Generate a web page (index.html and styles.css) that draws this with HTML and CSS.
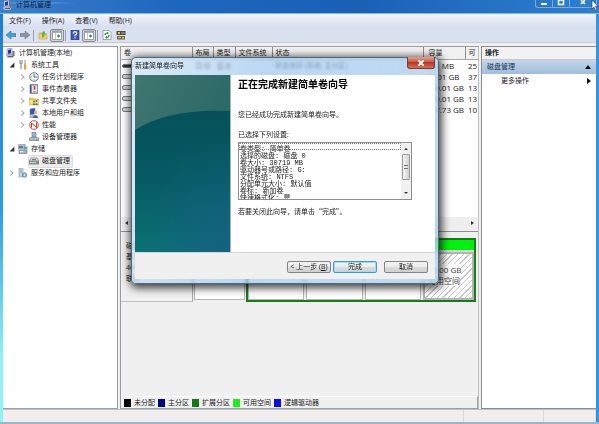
FILE: index.html
```html
<!DOCTYPE html>
<html lang="zh-CN">
<head>
	<meta charset="UTF-8">
	<title>计算机管理</title>

	<link rel="stylesheet" href="styles.css">
</head>
<body>

	<!-- 公用图标 -->
	<svg class="defs" aria-hidden="true">
		<symbol id="i-computer" viewBox="0 0 10 10">
			<path d="M0 7l3-2 6 2-2 3H1z" fill="#b9bec6"/>
			<path d="M1 1l5-1v6l-5 1z" fill="#e6ebf5" stroke="#6d7892" stroke-width=".6"/>
			<path d="M2 2l3-.8v4L2 6z" fill="#2338ae"/>
			<path d="M6.500 3h2v5h-2z" fill="#6d7686"/>
			<path d="M2 8.500h5" stroke="#56606f"/>
		</symbol>
		<symbol id="i-tools" viewBox="0 0 10 10">
			<path d="M2 0v3l1 1v5M4 0v3L3 4" fill="none" stroke="#8d939a" stroke-width="1.200"/>
			<path d="M7 0v5" stroke="#8d939a"/>
			<path d="M7 4.500v5" stroke="#e5a127" stroke-width="2.200"/>
		</symbol>
		<symbol id="i-clock" viewBox="0 0 10 10">
			<circle cx="5" cy="5" r="4.300" fill="#eef4fb" stroke="#77797c" stroke-width="1"/>
			<path d="M5 2v3h3" fill="none" stroke="#3568a6" stroke-width=".9"/>
			<path d="M1.500 5H3M5 7v1.500" stroke="#c99a3d" stroke-width=".8"/>
		</symbol>
		<symbol id="i-event" viewBox="0 0 10 10">
			<path d="M1 .5h7.500v9H1z" fill="#8193bd" stroke="#5b6480" stroke-width=".6"/>
			<path d="M3 1.500h5v7H3z" fill="#dfe6f3"/>
			<path d="M5.500 2v3.500" stroke="#d22a22" stroke-width="1.500"/>
			<path d="M4 7.500h3" stroke="#e0a52a"/>
			<path d="M1.500 1v8" stroke="#46527a"/>
		</symbol>
		<symbol id="i-share" viewBox="0 0 10 10">
			<path d="M0 2h4l1 1h5v6H0z" fill="#efc34f" stroke="#c9993b" stroke-width=".5"/>
			<path d="M.5 4h9v4.500h-9z" fill="#f9de86"/>
			<circle cx="5" cy="5.500" r="1" fill="#3f8a3e"/>
			<circle cx="7.500" cy="5" r="1" fill="#3f6fae"/>
			<path d="M3.500 9q1.500-4 3 0zM6 9q1.500-4 3 0z" fill="#4c8b56"/>
		</symbol>
		<symbol id="i-users" viewBox="0 0 10 10">
			<path d="M1 1l5-1v6l-5 1z" fill="#2f54b5" stroke="#8791a5" stroke-width=".6"/>
			<path d="M0 8l4-1 5 1-2 2H1z" fill="#aab0ba"/>
			<circle cx="6.500" cy="4.500" r="1.700" fill="#e0ad6a"/>
			<path d="M3.500 10q3-6 6 0z" fill="#3d66a8"/>
		</symbol>
		<symbol id="i-perf" viewBox="0 0 10 10">
			<circle cx="5" cy="5" r="4.300" fill="#fff" stroke="#b05752" stroke-width="1"/>
			<path d="M2.500 7.500V3l5 4.500V2.500" fill="none" stroke="#cf2f27" stroke-width="1"/>
		</symbol>
		<symbol id="i-device" viewBox="0 0 10 10">
			<path d="M3 0h4v5H3z" fill="#9fb2c8" stroke="#6c7785" stroke-width=".6"/>
			<path d="M0 6l2-1h6l2 1v3H0z" fill="#92989f"/>
			<path d="M1 7h8" stroke="#e4e8ec" stroke-width=".8"/>
			<path d="M7.500 8.300h1" stroke="#2fa53a"/>
		</symbol>
		<symbol id="i-storage" viewBox="0 0 10 10">
			<path d="M0 1l2-1h5v5H0z" fill="#b6c2cf" stroke="#74818f" stroke-width=".6"/>
			<path d="M1 2h4v2H1z" fill="#3b84a8"/>
			<path d="M1 6h8v3.500H1z" fill="#a8b1ba" stroke="#6b7580" stroke-width=".6"/>
			<path d="M6 2.500h3.500v3H6z" fill="#58a7c4"/>
			<path d="M2 7.700h3" stroke="#fff"/>
		</symbol>
		<symbol id="i-disk" viewBox="0 0 10 10">
			<path d="M0 5l2-3h6l2 3z" fill="#d4d7da" stroke="#74797d" stroke-width=".6"/>
			<path d="M0 5h10v3.500H0z" fill="#878c90"/>
			<path d="M1 6.500h6" stroke="#e6e8ea" stroke-width=".8"/>
			<path d="M3 3.700h4" stroke="#55595c" stroke-width=".8"/>
		</symbol>
		<symbol id="i-services" viewBox="0 0 10 10">
			<path d="M1 0h4v9H1z" fill="#c5d3e0" stroke="#8397aa" stroke-width=".6"/>
			<path d="M2 2h2M2 4h2" stroke="#6f8ba5" stroke-width=".7"/>
			<circle cx="6.500" cy="7" r="2.200" fill="#8eb1ce" stroke="#5c83a6" stroke-width=".8"/>
			<circle cx="6.500" cy="7" r=".8" fill="#fff"/>
		</symbol>
		<symbol id="i-panel" viewBox="0 0 10 10">
			<path d="M.5 1h9v8.500h-9z" fill="#fafafa" stroke="#8b8e94" stroke-width=".8"/>
			<path d="M.5 2h9" stroke="#8f949e" stroke-width="1.500"/>
			<path d="M3.500 3v6.500" stroke="#a4a8af" stroke-width=".6"/>
			<path d="M5 6h3M6.500 4.500v3" stroke="#39a045" stroke-width="1.300"/>
		</symbol>
	</svg>

	<div class="window">
		<header class="titlebar">
			<svg class="icon"><use href="#i-computer"/></svg>
			<h1>计算机管理</h1>
			<div class="winbtns">
				<button type="button" aria-label="最小化"><svg viewBox="0 0 10 8"><path d="M2 4h6" stroke="#fff" stroke-width="2"/></svg></button>
				<button type="button" aria-label="最大化"><svg viewBox="0 0 10 8"><path d="M2.500 0h5v4.500h-5z" fill="none" stroke="#fff" stroke-width="1.500"/></svg></button>
				<button type="button" class="wide" aria-label="关闭"><svg viewBox="0 0 10 8"><path d="M3 0l4 4M7 0L3 4" stroke="#fff" stroke-width="1.500"/></svg></button>
			</div>
		</header>

		<nav class="menu">
			<a href="#">文件(F)</a>
			<a href="#">操作(A)</a>
			<a href="#">查看(V)</a>
			<a href="#">帮助(H)</a>
		</nav>

		<div class="toolbar">
			<button type="button" aria-label="后退"><svg viewBox="0 0 10 10"><path d="M0 5l5-4v2.500h5v3H5V9z" fill="#3aa3dc" stroke="#2477b5" stroke-width=".6"/></svg></button>
			<button type="button" aria-label="前进"><svg viewBox="0 0 10 10"><path d="M10 5L5 1v2.500H0v3h5V9z" fill="#8c939e" stroke="#757c88" stroke-width=".6"/></svg></button>
			<span class="sep"></span>
			<button type="button" aria-label="上一级"><svg viewBox="0 0 10 10"><path d="M1 3h3l1 1h4v5H1z" fill="#f2d06c" stroke="#c9a34b" stroke-width=".6"/><path d="M4 8V4L2.500 4.500 6 .5l2 4H6.500q0 3-2.500 3.500z" fill="#69b544"/></svg></button>
			<button type="button" class="on" aria-label="显示控制台树"><svg viewBox="0 0 10 10"><use href="#i-panel"/></svg></button>
			<span class="sep"></span>
			<button type="button" aria-label="帮助"><svg viewBox="0 0 10 10"><path d="M1 0h8v10H1z" fill="#3c57bd" stroke="#27366f" stroke-width=".6"/><path d="M3.300 3.500q0-1.800 1.700-1.800t1.700 1.500Q6.700 4.500 5 5v1.300M5 7.300v1.300" fill="none" stroke="#fff" stroke-width="1.200"/></svg></button>
			<button type="button" class="on" aria-label="显示操作窗格"><svg viewBox="0 0 10 10"><use href="#i-panel"/></svg></button>
			<span class="sep"></span>
			<button type="button" aria-label="刷新"><svg viewBox="0 0 10 10"><path d="M1 .5h6l2 2v7H1z" fill="#fff" stroke="#7d858c" stroke-width=".7"/><path d="M3 5q0-2 2.500-2M7 5q0 2.500-2.500 2.500" fill="none" stroke="#278f2e" stroke-width="1.200"/><path d="M5 1.500l2 1.500-2 1.500zM5 6L3 7.500 5 9z" fill="#278f2e"/></svg></button>
			<button type="button" aria-label="设置"><svg viewBox="0 0 10 10"><path d="M.5 1h9v4h-9z" fill="#4f4c3c"/><path d="M1 6h8v3.500H1z" fill="#6d6848"/><path d="M2 2h2v2H2zM6 7h2v1.500H6z" fill="#e3c53e"/><path d="M5.500 3h3M2 7.500h3" stroke="#d9d8cc" stroke-width=".9"/></svg></button>
		</div>

		<main class="panes">
			<aside class="tree">
				<div class="row"><svg class="icon"><use href="#i-computer"/></svg>计算机管理(本地)</div>
				<ul>
					<li>
						<div class="row"><i class="arrow open"></i><svg class="icon"><use href="#i-tools"/></svg>系统工具</div>
						<ul>
							<li class="row"><i class="arrow"></i><svg class="icon"><use href="#i-clock"/></svg>任务计划程序</li>
							<li class="row"><i class="arrow"></i><svg class="icon"><use href="#i-event"/></svg>事件查看器</li>
							<li class="row"><i class="arrow"></i><svg class="icon"><use href="#i-share"/></svg>共享文件夹</li>
							<li class="row"><i class="arrow"></i><svg class="icon"><use href="#i-users"/></svg>本地用户和组</li>
							<li class="row"><i class="arrow"></i><svg class="icon"><use href="#i-perf"/></svg>性能</li>
							<li class="row"><i class="arrow none"></i><svg class="icon"><use href="#i-device"/></svg>设备管理器</li>
						</ul>
					</li>
					<li>
						<div class="row"><i class="arrow open"></i><svg class="icon"><use href="#i-storage"/></svg>存储</div>
						<ul>
							<li class="row"><i class="arrow none"></i><span class="current"><svg class="icon"><use href="#i-disk"/></svg>磁盘管理</span></li>
						</ul>
					</li>
					<li class="row"><i class="arrow"></i><svg class="icon"><use href="#i-services"/></svg>服务和应用程序</li>
				</ul>
			</aside>

			<section class="center">
				<div class="volumes">
					<table>
						<colgroup>
							<col class="c-name"><col class="c-layout"><col class="c-type"><col class="c-fs"><col><col class="c-size"><col class="c-free">
						</colgroup>
						<thead>
							<tr><th>卷</th><th>布局</th><th>类型</th><th>文件系统</th><th>状态</th><th>容量</th><th>可</th></tr>
						</thead>
						<tbody>
							<tr><td><i class="drive dark"></i></td><td>简单</td><td>基本</td><td></td><td>状态良好 (系统, 主分区)</td><td>251 MB</td><td>25</td></tr>
							<tr><td><i class="drive"></i></td><td></td><td></td><td></td><td></td><td>37.01 GB</td><td>37</td></tr>
							<tr><td><i class="drive"></i></td><td></td><td></td><td></td><td></td><td>139.01 GB</td><td>13</td></tr>
							<tr><td><i class="drive"></i></td><td></td><td></td><td></td><td></td><td>139.01 GB</td><td>13</td></tr>
							<tr><td><i class="drive"></i></td><td></td><td></td><td></td><td></td><td>107.73 GB</td><td>10</td></tr>
						</tbody>
					</table>
				</div>
				<div class="hscroll"><i class="left"></i><i class="right"></i></div>

				<div class="disk">
					<div class="diskinfo">磁盘 0<br>基本<br>465.76 GB<br>联机</div>
					<div class="part primary"></div>
					<div class="extended">
						<div class="part"></div>
						<div class="part"></div>
						<div class="part"></div>
						<div class="part free">
							<div class="cap"></div>
							<div class="hatch"><span>30.00 GB<br>可用空间</span></div>
						</div>
					</div>
				</div>

				<ul class="legend">
					<li class="black">未分配</li>
					<li class="navy">主分区</li>
					<li class="green">扩展分区</li>
					<li class="lime">可用空间</li>
					<li class="blue">逻辑驱动器</li>
				</ul>
			</section>

			<aside class="actions">
				<h2>操作</h2>
				<div class="group">磁盘管理<i class="up"></i></div>
				<a href="#" class="more">更多操作<i class="next"></i></a>
			</aside>
		</main>

		<footer class="status"><span></span><span></span><span></span></footer>

		<!-- 新建简单卷向导 -->
		<div class="dialog" role="dialog" aria-labelledby="dlgtitle">
			<div class="dlghead">
				<span id="dlgtitle">新建简单卷向导</span>
				<button type="button" class="close" aria-label="关闭"><svg viewBox="0 0 10 8"><path d="M2.500 1.500l5 5M7.500 1.500l-5 5" stroke="#fff" stroke-width="1.800"/></svg></button>
			</div>
			<div class="dlgbody">
				<svg class="banner" viewBox="0 0 95 177" preserveAspectRatio="none" aria-hidden="true">
					<defs>
						<linearGradient id="top" x1="0" y1="0" x2="1" y2="1">
							<stop offset="0" stop-color="#40776f"/>
							<stop offset="1" stop-color="#1d5f62"/>
						</linearGradient>
						<linearGradient id="low" x1="0" y1="0" x2="0" y2="1">
							<stop offset="0" stop-color="#05515a"/>
							<stop offset=".5" stop-color="#065b64"/>
							<stop offset="1" stop-color="#0a7474"/>
						</linearGradient>
						<radialGradient id="side" cx="1" cy="1" r="1">
							<stop offset="0" stop-color="#155f80" stop-opacity=".9"/>
							<stop offset="1" stop-color="#155f80" stop-opacity="0"/>
						</radialGradient>
					</defs>
					<path d="M0 0h95v177H0z" fill="url(#top)"/>
					<path d="M0 55Q34 33 95 36v141H0z" fill="url(#low)"/>
					<path d="M0 60h95v117H0z" fill="url(#side)"/>
				</svg>
				<div class="content">
					<h2>正在完成新建简单卷向导</h2>
					<p class="done">您已经成功完成新建简单卷向导。</p>
					<label for="settings">已选择下列设置:</label>
					<div class="listbox">
						<select id="settings" size="8">
							<option class="focus">卷类型: 简单卷</option>
							<option>选择的磁盘: 磁盘 0</option>
							<option>卷大小: 30719 MB</option>
							<option>驱动器号或路径: G:</option>
							<option>文件系统: NTFS</option>
							<option>分配单元大小: 默认值</option>
							<option>卷标: 新加卷</option>
							<option>快速格式化: 是</option>
						</select>
						<div class="vscroll"><i class="sup"></i><i class="thumb"></i><i class="sdown"></i></div>
					</div>
					<p class="tip">若要关闭此向导，请单击“完成”。</p>
				</div>
			</div>
			<div class="dlgfoot">
				<button type="button">&lt; 上一步 (<u>B</u>)</button>
				<button type="button" class="default">完成</button>
				<button type="button" class="cancel">取消</button>
			</div>
		</div>

		<svg class="cursor" viewBox="0 0 8 11" aria-hidden="true"><path d="M1 0v9l2-2 1.500 3.500 1.500-.7L4.500 6.500H7z" fill="#fff" stroke="#333" stroke-width=".6"/></svg>
	</div>

</body>
</html>
```
FILE: styles.css
```css
*{
	margin: 0;
	padding: 0;
	box-sizing: border-box;
}

body{
	font: 7px/12px "Open Sans", "Noto Sans CJK SC", sans-serif;
	color: #1c1c1c;
}

ul{
	list-style: none;
}

a{
	color: inherit;
	text-decoration: none;
}

button{
	font: inherit;
	color: inherit;
	border: 0;
	background: none;
}

h1, h2{
	font-size: 7px;
	font-weight: normal;
}

svg{
	display: block;
}

.defs{
	position: absolute;
	width: 0;
	height: 0;
}

.icon{
	width: 10px;
	height: 10px;
	flex: none;
}

.window{
	position: relative;
	min-height: 100vh;
	display: flex;
	flex-direction: column;
	padding: 0 3px;
	border-bottom: 2px solid #8fb9d2;
	background: linear-gradient(90deg, transparent 50%, #3b93de 50%), linear-gradient(#1f78d0, #2f9be4 50%, #8ff3f3 85%);
}

/*标题栏*/
.titlebar{
	display: flex;
	align-items: flex-start;
	gap: 3px;
	height: 14px;
	margin: 0 -3px;
	padding-left: 3px;
	background: radial-gradient(ellipse at 35px 3px, rgba(150,190,232,.75), rgba(150,190,232,0) 50px), linear-gradient(90deg, #3b80cc, #1d66bd 30%, #1a61b6 60%, #2e7fd0);
	border-bottom: 1px solid #85b6e6;
}

.titlebar h1{
	line-height: 9px;
	color: #0c1c33;
}

.winbtns{
	display: flex;
	margin-left: auto;
	margin-right: 2px;
	height: 8px;
	border: 1px solid #7fa9d6;
	border-top: 0;
	border-radius: 0 0 3px 3px;
}

.winbtns button{
	width: 17px;
	border-right: 1px solid #7fa9d6;
}

.winbtns .wide{
	width: 26px;
	border-right: 0;
}

.winbtns svg{
	width: 10px;
	height: 8px;
	margin: 0 auto;
}

.menu{
	display: flex;
	gap: 11px;
	height: 14px;
	padding: 0 6px;
	line-height: 14px;
	background: linear-gradient(#f0f3fb, #d7deef);
}

.toolbar{
	display: flex;
	align-items: center;
	height: 15px;
	padding: 0 1px;
	background: #dbe1f1;
	border-bottom: 1px solid #c4c9d6;
}

.toolbar button{
	width: 14px;
	height: 13px;
	padding: 1px 2px;
}

.toolbar .on{
	border: 1px solid #888d96;
	border-radius: 2px;
	background: #cfd3db;
	padding: 0 1px;
}

.toolbar svg{
	width: 10px;
	height: 10px;
}

.sep{
	width: 1px;
	height: 11px;
	margin: 0 2px 0 1px;
	background: #9aa0ad;
}

.panes{
	flex: 1;
	display: flex;
	gap: 2px;
	padding-top: 3px;
	background: #f0f0f0;
}

/*左侧树*/
.tree{
	width: 115px;
	padding: 0 3px;
	background: #fff;
	border: 1px solid #999da3;
	border-left: 0;
}

.tree .row{
	display: flex;
	align-items: center;
	gap: 3px;
	height: 12px;
	white-space: nowrap;
}

.tree ul{
	padding-left: 3px;
}

.tree ul ul{
	padding-left: 11px;
}

.arrow{
	width: 6px;
	height: 6px;
	background: #a6a6a6;
	clip-path: polygon(20% 0, 80% 50%, 20% 100%, 20% 80%, 52% 50%, 20% 20%);
}

.arrow.open{
	background: #333;
	clip-path: polygon(90% 10%, 90% 90%, 10% 90%);
}

.arrow.none{
	visibility: hidden;
}

.current{
	display: flex;
	align-items: center;
	gap: 3px;
	height: 11px;
	padding-right: 2px;
	background: #ececec;
	outline: 1px solid #dcdcdc;
	border-radius: 1px;
}

/*中间*/
.center{
	flex: 1;
	min-width: 0;
	display: flex;
	flex-direction: column;
	border: 1px solid #9a9da2;
	border-right-color: #c0c0c0;
}

.volumes{
	height: 170px;
	background: #fff;
	overflow: hidden;
}

.volumes table{
	width: 100%;
	table-layout: fixed;
	border-collapse: collapse;
}

.c-name{ width: 71px; }
.c-layout{ width: 21px; }
.c-type{ width: 22px; }
.c-fs{ width: 37px; }
.c-size{ width: 42px; }
.c-free{ width: 13px; }

.volumes th{
	height: 12px;
	padding-left: 3px;
	font-weight: normal;
	text-align: left;
	white-space: nowrap;
	overflow: hidden;
	background: #f1f1f1;
	border-right: 1px solid #8f8f8f;
	border-bottom: 1px solid #a8a8a8;
}

.volumes th:last-child{
	border-right: 0;
}

.volumes td{
	height: 11px;
	padding-left: 3px;
	font-size: 8px;
	line-height: 11px;
	white-space: nowrap;
	overflow: hidden;
}

.volumes td:nth-child(5){
	font-size: 7px;
}

.volumes td:nth-child(6){
	padding-left: 3px;
}

.volumes th:nth-child(6){
	padding-left: 5px;
}

.drive{
	display: block;
	width: 12px;
	height: 5px;
	margin-left: -2px;
	border: 1px solid #77797c;
	border-radius: 2px;
	background: #d3d5d7;
}

.drive.dark{
	height: 4px;
	background: #333;
}

.hscroll{
	display: flex;
	justify-content: space-between;
	align-items: center;
	height: 12px;
	padding: 0 4px;
	background: #eee;
}

.hscroll i{
	border: 2px solid transparent;
}

.hscroll .left{
	border-left: 0;
	border-right: 3px solid #333;
}

.hscroll .right{
	border-right: 0;
	border-left: 3px solid #333;
}

/*磁盘图*/
.disk{
	display: flex;
	margin-top: 2px;
	padding: 6px 2px 0 0;
	border-top: 1px solid #8f8f8f;
	background: #f0f0f0;
}

.diskinfo{
	width: 72px;
	height: 64px;
	padding: 2px 5px;
	line-height: 11px;
	border-right: 1px solid #a8a8a8;
	border-bottom: 1px solid #c0c0c0;
}

.part{
	flex: 1;
	background: #fff;
	border: 1px solid #b5b5b5;
}

.primary{
	flex: none;
	width: 51px;
	margin: 1px 1px 2px;
}

.extended{
	flex: 1;
	display: flex;
	gap: 2px;
	border: 2px solid #187c1b;
}

.free{
	flex: none;
	display: flex;
	flex-direction: column;
	gap: 2px;
	width: 51px;
	border: 0;
	background: #d6d6d6;
}

.cap{
	height: 10px;
	background: #00f20c;
}

.hatch{
	flex: 1;
	padding: 11px 0 0 3px;
	line-height: 10px;
	border: 2px solid #b4b4b4;
	background: repeating-linear-gradient(135deg, #fff 0, #fff 3px, #c6c6c6 3px, #c6c6c6 4px);
}

.hatch span{
	font-size: 8px;
	color: #444;
	background: rgba(255,255,255,.85);
}

.legend{
	display: flex;
	gap: 3px;
	height: 12px;
	margin-top: auto;
	padding-left: 3px;
	line-height: 11px;
	border-top: 1px solid #fff;
	border-right: 1px solid #a0a0a0;
	white-space: nowrap;
}

.legend li{
	display: flex;
	align-items: center;
	gap: 3px;
}

.legend li::before{
	content: "";
	width: 7px;
	height: 8px;
	background: #000;
}

.legend .navy::before{ background: #00007c; }
.legend .green::before{ background: #107c10; }
.legend .lime::before{ background: #1cf01c; }
.legend .blue::before{ background: #0a0af0; }

/*右侧操作*/
.actions{
	width: 115px;
	background: #fff;
	border: 1px solid #8a8d92;
	border-right: 0;
}

.actions h2{
	height: 13px;
	padding-left: 3px;
	font-weight: bold;
	background: #f2f2f2;
	border-bottom: 1px solid #c9c9c9;
}

.group, .more{
	display: flex;
	align-items: center;
	justify-content: space-between;
	height: 14px;
	padding: 0 5px;
}

.group{
	background: linear-gradient(#c3d6ea, #9fbedd);
	color: #1a3556;
}

.more{
	padding-left: 19px;
}

.up{
	border: 3px solid transparent;
	border-top: 0;
	border-bottom: 4px solid #111;
}

.next{
	border: 3px solid transparent;
	border-right: 0;
	border-left: 4px solid #111;
}

.status{
	display: flex;
	height: 13px;
	background: #f0edec;
	border-top: 1px solid #b9c6c6;
}

.status span{
	width: 80px;
	border-right: 1px solid #dcd8d8;
}

.status span:first-child{
	flex: 1;
}

.status span:last-child{
	width: 52px;
}

/*向导对话框*/
.dialog{
	position: absolute;
	left: 131px;
	top: 57px;
	width: 308px;
	padding: 0 4px 5px;
	border-radius: 5px;
	background: linear-gradient(100deg, rgba(214,232,248,.85), rgba(160,200,238,.72) 40%, rgba(176,208,238,.8));
	backdrop-filter: blur(1px);
	box-shadow: inset 0 0 0 1px #50687e, 1px 2px 8px 2px rgba(0,0,0,.75);
}

.dlghead{
	display: flex;
	justify-content: space-between;
	height: 18px;
	line-height: 18px;
}

.close{
	width: 28px;
	height: 12px;
	border: 1px solid #7b3b36;
	border-top: 0;
	border-radius: 0 0 3px 3px;
	background: linear-gradient(#dfa091, #c9523f 50%, #b93423 50%, #d5705a);
}

.close svg{
	width: 10px;
	height: 8px;
	margin: 0 auto;
}

.dlgbody{
	display: flex;
	background: #fff;
	border-bottom: 1px solid #d6d6d6;
}

.banner{
	width: 96px;
	height: 177px;
	border-right: 1px solid #9fb7bd;
}

.content{
	flex: 1;
	padding: 3px 23px 0 7px;
}

.content h2{
	font-size: 10px;
	font-weight: bold;
	color: #000;
}

.done{
	margin-top: 19px;
}

.content label{
	display: block;
	margin-top: 8px;
}

.listbox{
	display: flex;
	height: 58px;
	margin-top: 1px;
	border: 1px solid #8c9096;
}

.listbox select{
	flex: 1;
	min-width: 0;
	height: 56px;
	overflow: hidden;
	border: 0;
	outline: 0;
	background: #fff;
	font: 7px/7px "Liberation Mono", "Noto Sans CJK SC", monospace;
	color: #222;
}

.listbox option{
	height: 7px;
	min-height: 7px;
	padding: 0 1px;
	font-size: 7px;
	line-height: 7px;
}

.listbox .focus{
	outline: 1px dotted #777;
	outline-offset: -1px;
}

.vscroll{
	display: flex;
	flex-direction: column;
	align-items: center;
	width: 10px;
	padding: 5px 1px;
	background: #f1f1f1;
}

.sup, .sdown{
	border: 2px solid transparent;
}

.sup{
	border-top: 0;
	border-bottom-color: #333;
}

.sdown{
	margin-top: auto;
	border-bottom: 0;
	border-top-color: #333;
}

.thumb{
	width: 8px;
	height: 26px;
	margin-top: 4px;
	border: 1px solid #9b9b9b;
	border-radius: 1px;
	background: linear-gradient(#777, #777) center 10px / 4px 1px no-repeat, linear-gradient(#777, #777) center 13px / 4px 1px no-repeat, linear-gradient(90deg, #f4f4f4, #d2d2d2);
}

.tip{
	margin-top: 5px;
	font-family: "Noto Sans CJK SC", sans-serif;
}

.dlgfoot{
	display: flex;
	justify-content: flex-end;
	gap: 2px;
	height: 26px;
	padding: 8px 7px 0 0;
	background: #f0f0f0;
}

.dlgfoot button{
	width: 44px;
	height: 12px;
	line-height: 10px;
	white-space: nowrap;
	border: 1px solid #858585;
	border-radius: 2px;
	background: linear-gradient(#f3f3f3, #ebebeb 50%, #dcdcdc 50%, #d0d0d0);
}

.dlgfoot .default{
	border-color: #3c9cc8;
	box-shadow: inset 0 0 0 1px #a5dcf2;
}

.dlgfoot .cancel{
	margin-left: 5px;
}

.cursor{
	position: absolute;
	top: 0;
	right: 0;
	width: 8px;
	height: 11px;
}
```
